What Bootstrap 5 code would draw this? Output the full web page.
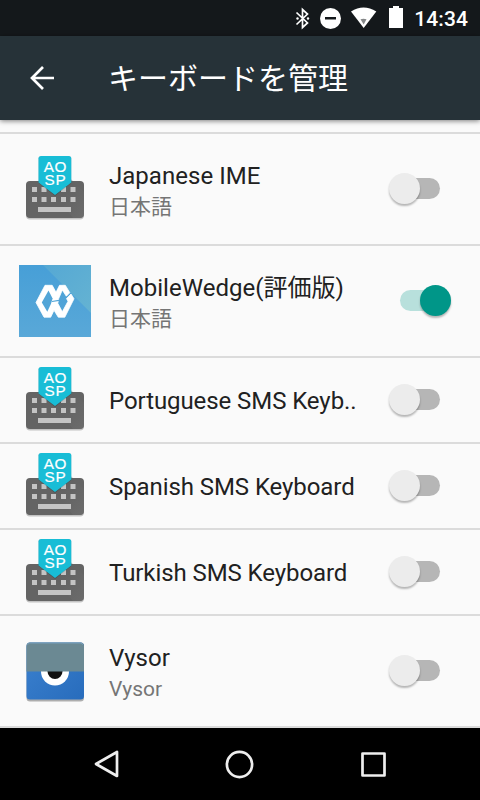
<!DOCTYPE html>
<html lang="ja">
<head>
<meta charset="utf-8">
<meta name="viewport" content="width=device-width, initial-scale=1">
<title>キーボードを管理</title>
<link href="https://cdn.jsdelivr.net/npm/bootstrap@5.3.0/dist/css/bootstrap.min.css" rel="stylesheet">
<style>
body{font-family:Roboto,"Noto Sans CJK JP",sans-serif;background:#fafafa;color:#212121;width:480px;height:800px}
svg{display:block;flex:none}
.status{height:36px;background:#14181b;padding-right:12px}
.clock{font-size:21px;font-weight:500;line-height:36px;letter-spacing:.1px;margin-left:10px;padding-top:1px}
.appbar{height:84px;background:#263238;padding-left:24px;box-shadow:0 1px 5px rgba(0,0,0,.5)}
.appbar h1{font-size:30px;line-height:40px;font-weight:400;margin-left:48px;padding-top:2px}
.ime-list{padding-top:12px;border-bottom:2px solid #dbdbdb}
.ime{height:86px;border-top:2px solid #dbdbdb;padding-left:19px;padding-right:20px}
.ime.tall{height:112px}
.ime-text{margin-left:18px;width:280px;padding-top:2px}
.tall .ime-text{padding-top:4px}
.ime-name{font-size:24px;line-height:32px;white-space:nowrap;letter-spacing:-.08px}
.tall .ime-name{letter-spacing:.03px}
.ime-lang{font-size:21px;line-height:30px;color:#757575}
.toggle{width:62px;height:31px;flex:none;padding:4px 11px 6px}
.toggle-track{height:21px;border-radius:11px;background:#b6b6b6}
.toggle-knob{width:31px;height:31px;border-radius:50%;background:#ececec;left:0;top:-1px;box-shadow:0 2px 2px rgba(0,0,0,.28)}
.on .toggle-track{background:#b8e0dc}
.on .toggle-knob{background:#009688;left:31px}
.navkeys{height:72px;background:#000}
</style>
<script src="https://cdn.jsdelivr.net/npm/bootstrap@5.3.0/dist/js/bootstrap.bundle.min.js"></script>
</head>
<body class="d-flex flex-column overflow-hidden m-0">
<svg width="0" height="0" class="position-absolute" aria-hidden="true">
<defs>
<linearGradient id="fold" x1="0" y1="0" x2="1" y2="1"><stop offset="0" stop-color="#555"/><stop offset="1" stop-color="#777"/></linearGradient>
<linearGradient id="wedge" x1="0" y1="0" x2="0" y2="1"><stop offset="0" stop-color="#479fd7"/><stop offset="1" stop-color="#59a8d8"/></linearGradient>
<linearGradient id="glint" x1="0" y1="0" x2="1" y2="1"><stop offset="0" stop-color="#55a8d4"/><stop offset="1" stop-color="#65b3d2"/></linearGradient>
<linearGradient id="eye" x1="0" y1="0" x2="1" y2="1"><stop offset="0" stop-color="#3c82d0"/><stop offset="1" stop-color="#286cbc"/></linearGradient>
<symbol id="aosp" viewBox="0 0 72 72">
<rect x="7" y="29" width="58" height="37.500" rx="4" fill="#000" opacity=".22"/>
<rect x="7" y="28" width="58" height="37" rx="4" fill="#646464"/>
<path d="M36 42 52.300 26.500 65 39V61q0 4-4 4H54Z" fill="url(#fold)" opacity=".4"/>
<path d="M13 34h5v5h-5zM22.500 34h5v5h-5zM32 34h5v5h-5zM42 34h5v5h-5zM51.500 34h5v5h-5zM13 44h5v5h-5zM22.500 44h5v5h-5zM32 44h5v5h-5zM42 44h5v5h-5zM51.500 44h5v5h-5zM19 54h33v5H19z" fill="#c4c4c4"/>
<path d="M22.300 3h27.400q2.600 0 2.600 2.600V30L36 43 19.500 30V5.600q0-2.600 2.800-2.600Z" fill="#000" opacity=".18"/>
<path d="M22.300 3h27.400q2.600 0 2.600 2.600V29.500L36 42 19.500 29.500V5.600q0-2.600 2.800-2.600Z" fill="#18bdd6"/>
<text x="36.300" y="18.800" text-anchor="middle" font-family="Liberation Sans, sans-serif" font-size="15.300" letter-spacing=".5" fill="#fff" stroke="#fff" stroke-width=".2">AO</text>
<text x="36.500" y="31.800" text-anchor="middle" font-family="Liberation Sans, sans-serif" font-size="15.300" letter-spacing=".9" fill="#fff" stroke="#fff" stroke-width=".2">SP</text>
</symbol>
</defs>
</svg>

<div class="status d-flex align-items-center justify-content-end text-white">
<svg width="114" height="36" viewBox="0 0 114 36" fill="#fff">
<path d="M6.500 12.500 17.500 23 12.500 27.500V9.500l5 4.500L6.500 24.500" fill="none" stroke="#fff" stroke-width="1.700"/>
<circle cx="7.500" cy="18.500" r="1.200"/><circle cx="18" cy="18.500" r="1.200"/>
<circle cx="40.500" cy="18.500" r="10.500"/><path d="M35 17h11v2.500H35z" fill="#14181b"/>
<path d="M61 11.500Q73.500 3.500 86.300 11.500L73.700 28Z"/><path d="M70.500 19.200q3-1 6 0L73.700 24.500Z" fill="#858788"/>
<path d="M103 6h6v2h4v20H99V8h4Z"/>
</svg>
<span class="clock">14:34</span>
</div>
<header class="appbar d-flex align-items-center text-white position-relative">
<svg width="36" height="36" viewBox="0 0 36 36" fill="none" stroke="#fff" stroke-width="2.700"><path d="M30 18H8M19 7 8 18l11 11"/></svg>
<h1 class="mb-0">キーボードを管理</h1>
</header>

<main class="ime-list">
<div class="ime tall d-flex align-items-center">
<svg width="72" height="72"><use href="#aosp"/></svg>
<div class="ime-text"><div class="ime-name">Japanese IME</div><div class="ime-lang">日本語</div></div>
<div class="toggle position-relative"><div class="toggle-track"></div><div class="toggle-knob position-absolute"></div></div>
</div>
<div class="ime tall d-flex align-items-center">
<svg width="72" height="72" viewBox="0 0 72 72">
<path d="M0 0h72v72H0z" fill="url(#wedge)"/><path d="M24 0H72V48Z" fill="url(#glint)"/>
<path d="M26 20.300H33.200L37 27.300 40.500 20.300H46.300L50.800 27.700 47.300 31.200 43.300 25 39.800 33.300 38.800 38.300 43.300 46.800 49 36.300 47.500 33.600 52 29 55 33.800 45.800 52.200H39.300L35 45.300 31.700 52.200H25L17 37.500Z" fill="#fff" stroke="#fff" stroke-width=".8" stroke-linejoin="round"/>
<path d="M29.500 25.500 22.800 37.500 28.300 46.800 32 38.800 33.600 33.500Z" fill="#52a5d7"/>
<path d="M33 36.500 40 35.300" stroke="#52a5d7" stroke-width="1.200"/>
</svg>
<div class="ime-text"><div class="ime-name">MobileWedge(評価版)</div><div class="ime-lang">日本語</div></div>
<div class="toggle on position-relative"><div class="toggle-track"></div><div class="toggle-knob position-absolute"></div></div>
</div>
<div class="ime d-flex align-items-center">
<svg width="72" height="72"><use href="#aosp"/></svg>
<div class="ime-text"><div class="ime-name">Portuguese SMS Keyb..</div></div>
<div class="toggle position-relative"><div class="toggle-track"></div><div class="toggle-knob position-absolute"></div></div>
</div>
<div class="ime d-flex align-items-center">
<svg width="72" height="72"><use href="#aosp"/></svg>
<div class="ime-text"><div class="ime-name">Spanish SMS Keyboard</div></div>
<div class="toggle position-relative"><div class="toggle-track"></div><div class="toggle-knob position-absolute"></div></div>
</div>
<div class="ime d-flex align-items-center">
<svg width="72" height="72"><use href="#aosp"/></svg>
<div class="ime-text"><div class="ime-name">Turkish SMS Keyboard</div></div>
<div class="toggle position-relative"><div class="toggle-track"></div><div class="toggle-knob position-absolute"></div></div>
</div>
<div class="ime tall d-flex align-items-center">
<svg width="72" height="72" viewBox="0 0 72 72">
<rect x="7.500" y="9" width="57.500" height="57.500" rx="3.500" fill="#000" opacity=".3"/>
<rect x="7.500" y="7.500" width="57.500" height="57" rx="3.500" fill="url(#eye)"/>
<circle cx="36" cy="36.500" r="14" fill="#fff"/><circle cx="36" cy="36.500" r="7.500" fill="#111"/>
<path d="M7.500 36.500V11q0-3.500 3.500-3.500H61.500q3.500 0 3.500 3.500V36.500Z" fill="#6b8993"/>
<path d="M8.500 9.500 10.500 8H62l2 1.500" fill="none" stroke="#79a4c8" stroke-width=".8"/>
</svg>
<div class="ime-text"><div class="ime-name">Vysor</div><div class="ime-lang">Vysor</div></div>
<div class="toggle position-relative"><div class="toggle-track"></div><div class="toggle-knob position-absolute"></div></div>
</div>
</main>

<nav class="navkeys d-flex align-items-center justify-content-center" aria-label="ナビゲーション">
<svg width="296" height="36" viewBox="0 0 296 36" fill="none" stroke="#eee" stroke-width="2.700" stroke-linejoin="round"><path d="M25 6V30L4 18Z"/><circle cx="147.500" cy="18.500" r="12.600"/><path d="M270.500 7.500h22v22h-22z"/></svg>
</nav>
</body>
</html>
